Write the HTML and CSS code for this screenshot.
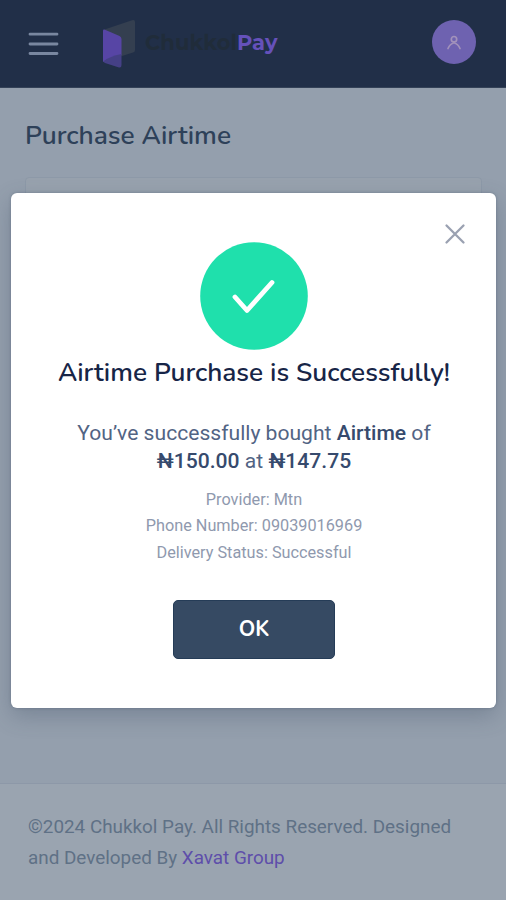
FILE: index.html
```html
<!DOCTYPE html>
<html lang="en">
<head>
<meta charset="utf-8">
<meta name="viewport" content="width=device-width, initial-scale=1">
<title>Purchase Airtime</title>
<link rel="stylesheet" href="styles.css">
</head>
<body>
<div class="page">
  <header class="header">
    <svg class="menu" width="32" height="26" viewBox="0 0 32 26" fill="none" stroke="#7987a0" stroke-width="2.8" stroke-linecap="round"><path d="M3 3.200h27M3 13h27M3 22.500h27"/></svg>
    <div class="brand">
      <svg class="logo" width="34" height="50" viewBox="0 0 34 50">
        <path d="M1 11 30 1.300Q33 .4 33 3v28q0 2-2 2.600L1 43z" fill="#343f50"/>
        <path d="M1 12q0-2 2-1.200l14.500 6.300q2 1 2 3V36L1 43z" fill="#5745a5"/>
        <path d="M1 42.500Q8 37 19.500 35v11q0 3-2.500 2.500L3 44z" fill="#454086"/>
      </svg>
      <span class="name">Chukkol<span class="pay">Pay</span></span>
    </div>
    <div class="avatar">
      <svg width="16" height="18" viewBox="0 0 16 18" fill="none" stroke="#a292bb" stroke-width="1.700" stroke-linecap="round"><circle cx="8" cy="6.200" r="2.700"/><path d="M2 15.500Q4 11 8 9.800Q12 11 14 15.500"/></svg>
    </div>
  </header>
  <main class="main">
    <h1 class="heading">Purchase Airtime</h1>
    <div class="card"></div>
  </main>
  <footer class="footer">
    <div class="copy">©2024 Chukkol Pay. All Rights Reserved. Designed</div>
    <div class="by">and Developed By <a class="link">Xavat Group</a></div>
  </footer>
</div>
<section class="modal" role="dialog">
  <svg class="close" width="22" height="22" viewBox="0 0 22 22" fill="none" stroke="#9aa1b1" stroke-width="2.300" stroke-linecap="round"><path d="M2.500 2.500l17 17M19.500 2.500l-17 17"/></svg>
  <svg class="check" width="108" height="108" viewBox="0 0 108 108"><circle cx="54" cy="54" r="53.800" fill="#1fe0ac"/><path d="M35 55l12 13.500L72 40.500" fill="none" stroke="#fff" stroke-width="4.800" stroke-linecap="round" stroke-linejoin="round"/></svg>
  <h2 class="title">Airtime Purchase is Successfully!</h2>
  <div class="message">
    <div class="line-a">You’ve successfully bought <b>Airtime</b> of</div>
    <div class="line-b"><b>₦150.00</b> at <b>₦147.75</b></div>
  </div>
  <div class="details">
    <div class="d1">Provider: Mtn</div>
    <div class="d2">Phone Number: 09039016969</div>
    <div class="d3">Delivery Status: Successful</div>
  </div>
  <button class="ok">OK</button>
</section>
</body>
</html>
```
FILE: styles.css
```css
* { box-sizing: border-box; }
body { margin: 0; font-family: Roboto, sans-serif; overflow: hidden; }
.page { height: 900px; display: flex; flex-direction: column; background: #949fad; }
.header { height: 88px; flex: none; display: flex; align-items: flex-start; background: #212f48; border-bottom: 1px solid #344258; }
.menu { margin: 31px 0 0 27px; }
.brand { display: flex; margin: 19px 0 0 43px; }
.name { margin: 10px 0 0 9px; font: 700 21px/28px Montserrat, "Open Sans", sans-serif; letter-spacing: 0.1px; color: #202c3a; white-space: nowrap; }
.pay { color: #6551ba; }
.avatar { width: 44px; height: 44px; margin: 20px 30px 0 auto; border-radius: 50%; background: #6e62b0; display: flex; align-items: center; justify-content: center; }
.main { flex: 1; padding: 29px 24px 0 25px; }
.heading { margin: 0; font: 600 26.3px/36px Nunito, "Open Sans", sans-serif; color: #2e4159; white-space: nowrap; }
.card { height: 430px; margin-top: 24px; background: #98a2ae; border: 1px solid #8d99a8; border-radius: 4px; }
.footer { height: 117px; flex: none; padding: 27px 27px 0 28px; background: #9aa4b0; border-top: 1px solid #8d98a8; font-size: 18.88px; line-height: 31px; color: #5f7186; white-space: nowrap; }
.link { color: #5e4eaa; }
.modal { position: absolute; left: 11px; top: 193px; width: 485px; height: 515px; display: flex; flex-direction: column; align-items: center; background: #fff; border-radius: 6px; box-shadow: 0 8px 22px rgba(55, 73, 95, .3), 0 0 3px rgba(55, 73, 95, .35); }
.close { position: absolute; right: 30px; top: 30px; }
.check { flex: none; margin: 49px 0 0 1px; }
.title { margin: 5px 0 0 1px; font: 600 26.2px/36px Nunito, "Open Sans", sans-serif; color: #172547; white-space: nowrap; }
.message { margin: 28px 0 0 1px; font-size: 21.1px; line-height: 28px; color: #526484; text-align: center; white-space: nowrap; }
.message b { font-weight: 500; color: #364a6d; }
.details { margin: 12px 0 0 1px; font-size: 16.25px; line-height: 26.3px; color: #8f99ae; text-align: center; white-space: nowrap; }
.ok { width: 162px; height: 59px; margin: 34px 0 0 1px; padding: 0; border: 1px solid #253c57; border-radius: 5px; background: #364a63; color: #fff; font: 700 21px/28px Nunito, "Open Sans", sans-serif; }
```
